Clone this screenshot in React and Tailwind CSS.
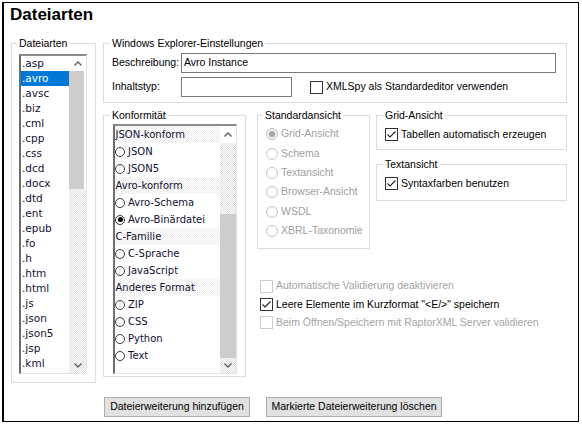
import React from "react";

const F = "font-['Liberation_Sans',Arial,sans-serif]";
const LF = "font-['DejaVu_Sans',Verdana,sans-serif]";
const TRACK =
  "bg-[image:repeating-conic-gradient(#dedede_0%_25%,#ffffff_0%_50%)] bg-[length:2px_2px]";
const HEAD =
  "bg-[image:repeating-conic-gradient(#ededed_0%_25%,#ffffff_0%_50%)] bg-[length:2px_2px]";

function Group({ label, className, legendClass = "ml-[6px]", children }) {
  return (
    <fieldset className={`border border-[#dcdcdc] min-w-0 ${className}`}>
      <legend className={`${legendClass} px-[2px] text-[10.5px] leading-[13px] text-black`}>
        {label}
      </legend>
      {children}
    </fieldset>
  );
}

function Up() {
  return (
    <svg width="8" height="5" viewBox="0 0 8 5">
      <polyline points="0.5,4.5 4,1 7.5,4.5" fill="none" stroke="#606060" strokeWidth="1.4" />
    </svg>
  );
}
function Down() {
  return (
    <svg width="8" height="5" viewBox="0 0 8 5">
      <polyline points="0.5,0.5 4,4 7.5,0.5" fill="none" stroke="#606060" strokeWidth="1.4" />
    </svg>
  );
}

function Check({ checked, disabled }) {
  return (
    <span
      className={`w-[13px] h-[13px] shrink-0 border bg-white flex items-center justify-center ${
        disabled ? "border-[#cccccc]" : "border-[#333333]"
      }`}
    >
      {checked && (
        <svg width="11" height="11" viewBox="0 0 11 11">
          <polyline points="1.5,5.5 4,8 9.5,2.5" fill="none" stroke="#222" strokeWidth="1.1" />
        </svg>
      )}
    </span>
  );
}

function CheckRow({ label, checked, disabled, className = "" }) {
  return (
    <div className={`flex items-center gap-[3px] ${className}`}>
      <Check checked={checked} disabled={disabled} />
      <span className={`text-[10.5px] whitespace-nowrap ${disabled ? "text-[#a3a3a3]" : "text-black"}`}>
        {label}
      </span>
    </div>
  );
}

function StdRadio({ label, checked }) {
  return (
    <div className="h-[19.4px] flex items-center gap-[3px]">
      <span
        className={`w-[12px] h-[12px] rounded-full border border-[#c4c4c4] flex items-center justify-center ${
          checked ? "bg-[#eeeeee]" : "bg-white"
        }`}
      >
        {checked && <span className="w-[6px] h-[6px] rounded-full bg-[#a6a6a6]" />}
      </span>
      <span className="text-[10.5px] text-[#a0a0a0] whitespace-nowrap">{label}</span>
    </div>
  );
}

const exts = [
  ".asp", ".avro", ".avsc", ".biz", ".cml", ".cpp", ".css", ".dcd", ".docx", ".dtd", ".ent",
  ".epub", ".fo", ".h", ".htm", ".html", ".js", ".json", ".json5", ".jsp", ".kml",
];

const konf = [
  { h: "JSON-konform" },
  { r: "JSON" },
  { r: "JSON5" },
  { h: "Avro-konform" },
  { r: "Avro-Schema" },
  { r: "Avro-Binärdatei", c: true },
  { h: "C-Familie" },
  { r: "C-Sprache" },
  { r: "JavaScript" },
  { h: "Anderes Format" },
  { r: "ZIP" },
  { r: "CSS" },
  { r: "Python" },
  { r: "Text" },
];

export default function App() {
  return (
    <div className={`w-[582px] h-[425px] bg-white overflow-hidden ${F}`}>
      <div className="ml-[2px] mt-[2px] w-[577px] h-[420px] border border-black border-l-2 flex flex-col">
        <div className="ml-[6px] mt-[2px] h-[20px] leading-[20px] text-[17px] font-bold text-black">
          Dateiarten
        </div>

        <div className="flex mt-[11.5px] ml-[7px] gap-[7px]">
          {/* Dateiarten list */}
          <Group label="Dateiarten" className="w-[85px] h-[346px]" legendClass="ml-[5px]">
            <div className="pl-[7px] pt-[4.5px]">
              <div className="w-[68px] h-[320px] border-t-2 border-l-2 border-t-[#8c8c8c] border-l-[#6e6e6e] border-r border-b border-r-[#e3e3e3] border-b-[#e3e3e3] flex bg-white">
                <div className={`flex-1 ${LF} text-[10.5px] text-[#111133]`}>
                  {exts.map((e) => (
                    <div
                      key={e}
                      className={`h-[15px] leading-[15px] pl-[1px] ${
                        e === ".avro" ? "bg-[#0078d7] text-white" : ""
                      }`}
                    >
                      {e}
                    </div>
                  ))}
                </div>
                <div className="w-[17px] flex flex-col">
                  <div className="h-[15px] bg-white flex items-center justify-center">
                    <Up />
                  </div>
                  <div className="h-[118px] bg-[#cdcdcd] mr-[2px]" />
                  <div className={`flex-1 ${TRACK}`} />
                  <div className={`h-[16px] flex items-center justify-center ${TRACK}`}>
                    <Down />
                  </div>
                </div>
              </div>
            </div>
          </Group>

          <div className="flex flex-col w-[464px]">
            {/* Windows Explorer */}
            <Group label="Windows Explorer-Einstellungen" className="h-[66.5px]">
              <div className="pl-[8px] pr-[10px]">
                <div className="flex items-center h-[20px] mt-[3.5px]">
                  <span className="w-[69px] text-[10.5px] text-black">Beschreibung:</span>
                  <div className="flex-1 h-[20px] border border-[#7a7a7a] bg-white flex items-center pl-[2px] text-[10.5px] text-black">
                    Avro Instance
                  </div>
                </div>
                <div className="flex items-center h-[20px] mt-[4px]">
                  <span className="w-[69px] text-[10.5px] text-black">Inhaltstyp:</span>
                  <div className="w-[111px] h-[20px] border border-[#7a7a7a] bg-white" />
                  <CheckRow className="ml-[18px] gap-[2px]" label="XMLSpy als Standardeditor verwenden" />
                </div>
              </div>
            </Group>

            <div className="flex mt-[5.5px] gap-[11px]">
              {/* Konformität */}
              <Group label="Konformität" className="w-[143px] h-[268.5px]">
                <div className="pl-[8.5px] pt-[2.5px]">
                  <div className="w-[124px] h-[250px] border-t-2 border-l-2 border-t-[#8c8c8c] border-l-[#6e6e6e] border-r border-b border-r-[#e3e3e3] border-b-[#e3e3e3] flex bg-white">
                    <div className={`flex-1 ${LF} text-[10px] text-[#111133]`}>
                      {konf.map((k, i) =>
                        k.h ? (
                          <div key={i} className={`h-[17px] leading-[17px] pl-[1px] ${HEAD}`}>
                            {k.h}
                          </div>
                        ) : (
                          <div key={i} className="h-[17px] flex items-center gap-[3px] pl-[0.5px]">
                            <span className="w-[10px] h-[10px] rounded-full border border-[#3a3a3a] bg-white flex items-center justify-center">
                              {k.c && <span className="w-[5px] h-[5px] rounded-full bg-black" />}
                            </span>
                            <span>{k.r}</span>
                          </div>
                        )
                      )}
                    </div>
                    <div className="w-[16px] flex flex-col">
                      <div className="h-[17px] bg-white flex items-center justify-center">
                        <Up />
                      </div>
                      <div className={`h-[71px] ${TRACK}`} />
                      <div className="h-[144px] bg-[#cdcdcd]" />
                      <div className={`flex-1 flex items-center justify-center ${TRACK}`}>
                        <Down />
                      </div>
                    </div>
                  </div>
                </div>
              </Group>

              <div className="flex flex-col">
                <div className="flex gap-[6px]">
                  <Group label="Standardansicht" className="w-[113px] h-[140.5px]" legendClass="ml-[5px]">
                    <div className="pl-[8px] pt-[3px]">
                      <StdRadio label="Grid-Ansicht" checked />
                      <StdRadio label="Schema" />
                      <StdRadio label="Textansicht" />
                      <StdRadio label="Browser-Ansicht" />
                      <StdRadio label="WSDL" />
                      <StdRadio label="XBRL-Taxonomie" />
                    </div>
                  </Group>
                  <div className="flex flex-col w-[191px]">
                    <Group label="Grid-Ansicht" className="h-[41.5px]">
                      <div className="pl-[8px] pt-[6px]">
                        <CheckRow className="h-[14px]" label="Tabellen automatisch erzeugen" checked />
                      </div>
                    </Group>
                    <Group label="Textansicht" className="h-[43.5px] mt-[7.8px]">
                      <div className="pl-[8px] pt-[6px]">
                        <CheckRow className="h-[14px]" label="Syntaxfarben benutzen" checked />
                      </div>
                    </Group>
                  </div>
                </div>
                <div className="mt-[28px] pl-[3px] flex flex-col">
                  <CheckRow className="h-[18.3px]" label="Automatische Validierung deaktivieren" disabled />
                  <CheckRow className="h-[18.3px]" label={'Leere Elemente im Kurzformat "<E/>" speichern'} checked />
                  <CheckRow
                    className="h-[18.3px]"
                    label="Beim Öffnen/Speichern mit RaptorXML Server validieren"
                    disabled
                  />
                </div>
              </div>
            </div>

            <div className="flex mt-[20px] ml-[1px] gap-[16px]">
              <button className="w-[146px] h-[20px] border border-[#adadad] bg-[#e1e1e1] text-[10.5px] text-black">
                Dateierweiterung hinzufügen
              </button>
              <button className="w-[176px] h-[20px] border border-[#adadad] bg-[#e1e1e1] text-[10.5px] text-black">
                Markierte Dateierweiterung löschen
              </button>
            </div>
          </div>
        </div>
      </div>
    </div>
  );
}
